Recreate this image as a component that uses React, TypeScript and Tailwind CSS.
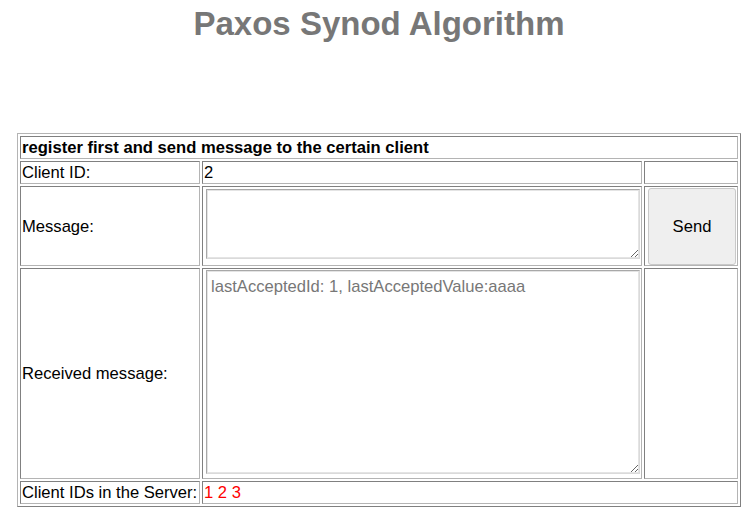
const cell =
  "flex items-center px-[1px] border border-t-[#808080] border-l-[#808080] border-b-[#b4b4b4] border-r-[#b4b4b4]";

const area =
  "block resize bg-white px-[4px] pt-[6px] pb-[4px] text-[16.6px] leading-[19px] border border-t-[#a8a8a8] border-l-[#a8a8a8] border-b-[#dadada] border-r-[#dadada] shadow-[inset_1px_1px_0_#e4e4e4,inset_-1px_-1px_0_#e4e4e4] outline-none placeholder:text-[#777]";

export default function App() {
  return (
    <div className="min-h-screen bg-white pl-[17px] pr-[7px] font-['Liberation_Sans',Arial,sans-serif] text-[16.6px] leading-[19px] text-black">
      <h1 className="pt-[5px] text-center text-[33px] font-bold leading-[38px] text-[#777]">
        Paxos Synod Algorithm
      </h1>

      <div className="mt-[90px] grid w-[724px] grid-cols-[180px_440px_94px] grid-rows-[23px_23px_80px_211px_23px] gap-[2px] border border-t-[#b4b4b4] border-l-[#b4b4b4] border-b-[#808080] border-r-[#808080] p-[2px]">
        <div className={`${cell} col-span-3 font-bold`}>
          register first and send message to the certain client
        </div>

        <div className={cell}>Client ID:</div>
        <div className={cell}>2</div>
        <div className={cell}></div>

        <div className={cell}>Message:</div>
        <div className={`${cell} items-start`}>
          <textarea className={`${area} ml-[2px] mt-[2px] h-[70px] w-[435px]`} />
        </div>
        <div className={cell}>
          <button className="ml-[2px] h-[77px] w-[90px] rounded-[3px] border border-[#c9c9c9] bg-[#efefef] text-[16.6px]">
            Send
          </button>
        </div>

        <div className={cell}>Received message:</div>
        <div className={`${cell} items-start`}>
          <textarea
            readOnly
            placeholder="lastAcceptedId: 1, lastAcceptedValue:aaaa"
            className={`${area} ml-[2px] mt-[1px] h-[204px] w-[435px]`}
          />
        </div>
        <div className={cell}></div>

        <div className={cell}>Client IDs in the Server:</div>
        <div className={`${cell} col-span-2 text-[#ff0000]`}>1 2 3</div>
      </div>
    </div>
  );
}
